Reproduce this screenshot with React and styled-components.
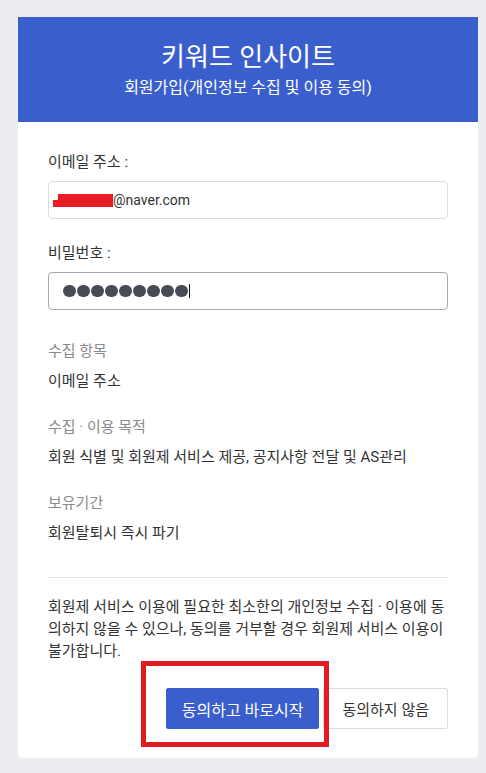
import React from 'react'
import styled, { createGlobalStyle } from 'styled-components'

const GlobalStyle = createGlobalStyle`
  html, body {
    margin: 0;
    padding: 0;
    background: #ecedf0;
  }
  body {
    font-family: Roboto, "Noto Sans CJK KR", sans-serif;
    color: #333;
  }
`

const Page = styled.div`
  padding: 17px 0 14px 18px;
`

const Card = styled.div`
  width: 460px;
  background: #fff;
  border-radius: 0 0 4px 4px;
`

const Header = styled.div`
  background: #3a5fcd;
  color: #fff;
  text-align: center;
  padding: 23px 0 23px;
`

const Title = styled.h1`
  margin: 0;
  font-size: 26px;
  font-weight: 400;
  line-height: 34px;
`

const Subtitle = styled.div`
  margin-top: 3px;
  font-size: 16px;
  line-height: 22px;
`

const Body = styled.div`
  padding: 30px 30px 29px;
`

const Field = styled.div`
  display: flex;
  flex-direction: column;
  gap: 9px;
  margin-bottom: ${p => p.last ? '31px' : '24px'};
`

const Label = styled.label`
  font-size: 15px;
  line-height: 20px;
  color: #333;
`

const InputBox = styled.div`
  height: 38px;
  box-sizing: border-box;
  border: 1px solid ${p => p.focused ? '#a8a8a8' : '#dcdcdc'};
  border-radius: 4px;
  display: flex;
  align-items: center;
  padding-left: ${p => p.focused ? '14px' : '4px'};
  font-size: 14px;
  color: #333;
`

const Redacted = styled.span`
  display: inline-flex;
  align-items: flex-end;
  height: 13px;
  &::before {
    content: '';
    width: 5px;
    height: 7px;
    background: #e81c24;
  }
  &::after {
    content: '';
    width: 55px;
    height: 13px;
    background: #e81c24;
  }
`

const Dots = styled.div`
  display: flex;
  align-items: center;
  gap: 1.5px;
`

const Dot = styled.span`
  width: 12.5px;
  height: 12.5px;
  border-radius: 50%;
  background: #474c54;
`

const Caret = styled.span`
  width: 1px;
  height: 14px;
  background: #111;
  margin-left: 1.5px;
`

const Section = styled.div`
  display: flex;
  flex-direction: column;
  gap: 10px;
  margin-bottom: 26px;
  &:last-of-type {
    margin-bottom: 0;
  }
`

const SectionTitle = styled.div`
  font-size: 15px;
  line-height: 20px;
  color: #8a8a8a;
`

const SectionValue = styled.div`
  font-size: 15px;
  line-height: 20px;
  color: #333;
`

const Divider = styled.hr`
  border: none;
  border-top: 1px solid #e4e4e4;
  margin: 34px 0 18px;
`

const Notice = styled.p`
  margin: 0;
  font-size: 15px;
  line-height: 22px;
  color: #333;
`

const Buttons = styled.div`
  display: flex;
  justify-content: flex-end;
  gap: 4px;
  margin-top: 26px;
`

const Highlight = styled.div`
  position: relative;
  &::after {
    content: '';
    position: absolute;
    left: -25px;
    right: -10px;
    top: -27px;
    bottom: -18px;
    border: 5px solid #e31b23;
    pointer-events: none;
    z-index: 2;
  }
`

const Button = styled.button`
  height: 41px;
  box-sizing: border-box;
  border-radius: 2px;
  font-family: Roboto, "Noto Sans CJK KR", sans-serif;
  cursor: pointer;
  border: 1px solid ${p => p.primary ? '#3a5fcd' : '#dcdcdc'};
  background: ${p => p.primary ? '#3a5fcd' : '#fff'};
  color: ${p => p.primary ? '#fff' : '#333'};
  font-size: ${p => p.primary ? '16px' : '15px'};
  padding: ${p => p.primary ? '0 15px' : '0 18px'};
`

export default function App() {
  return (
    <>
      <GlobalStyle />
      <Page>
        <Card>
          <Header>
            <Title>키워드 인사이트</Title>
            <Subtitle>회원가입(개인정보 수집 및 이용 동의)</Subtitle>
          </Header>
          <Body>
            <Field>
              <Label>이메일 주소 :</Label>
              <InputBox>
                <Redacted />@naver.com
              </InputBox>
            </Field>
            <Field last>
              <Label>비밀번호 :</Label>
              <InputBox focused>
                <Dots>
                  {Array.from({ length: 9 }).map((_, i) => <Dot key={i} />)}
                </Dots>
                <Caret />
              </InputBox>
            </Field>

            <Section>
              <SectionTitle>수집 항목</SectionTitle>
              <SectionValue>이메일 주소</SectionValue>
            </Section>
            <Section>
              <SectionTitle>수집 · 이용 목적</SectionTitle>
              <SectionValue>회원 식별 및 회원제 서비스 제공, 공지사항 전달 및 AS관리</SectionValue>
            </Section>
            <Section>
              <SectionTitle>보유기간</SectionTitle>
              <SectionValue>회원탈퇴시 즉시 파기</SectionValue>
            </Section>

            <Divider />
            <Notice>
              회원제 서비스 이용에 필요한 최소한의 개인정보 수집 · 이용에 동의하지 않을 수 있으나, 동의를 거부할 경우 회원제 서비스 이용이 불가합니다.
            </Notice>

            <Buttons>
              <Highlight>
                <Button primary>동의하고 바로시작</Button>
              </Highlight>
              <Button>동의하지 않음</Button>
            </Buttons>
          </Body>
        </Card>
      </Page>
    </>
  )
}
